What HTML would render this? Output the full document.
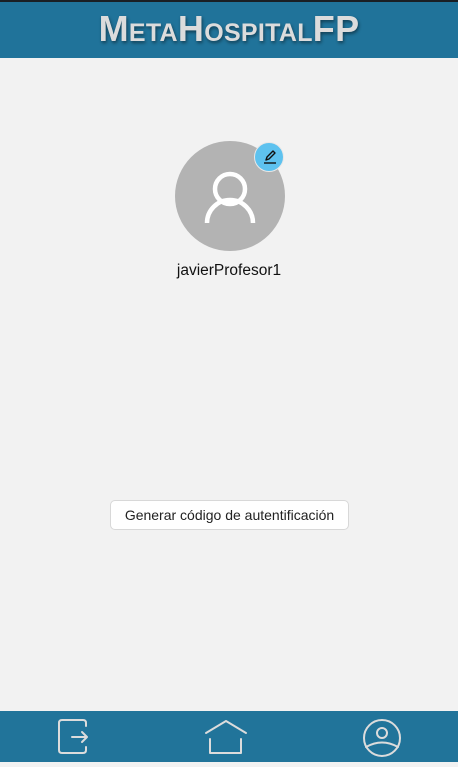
<!DOCTYPE html>
<html><head><meta charset="utf-8"><style>
body{margin:0;width:458px;height:762px;background:#f2f2f2;font-family:"Liberation Sans",sans-serif;position:relative;overflow:hidden}
.hdr{position:absolute;left:0;top:0;width:458px;height:58px;background:#20739a;border-top:2px solid #1a1f24;box-sizing:border-box}
.title{position:absolute;left:0;width:458px;top:6px;text-align:center;color:#dcdcdc;font-weight:bold;font-size:36px;font-variant:small-caps;letter-spacing:0.3px;text-shadow:1px 2px 3px rgba(0,0,0,.45)}
.ftr{position:absolute;left:0;top:711px;width:458px;height:51px;background:#21749a}
.av{position:absolute;left:175px;top:141px;width:110px;height:110px;border-radius:50%;background:#b3b3b3}
.badge{position:absolute;left:254px;top:142px;width:30px;height:30px;border-radius:50%;background:#5ec2ef;border:1px solid #e8e8e8;box-sizing:border-box}
.name{position:absolute;left:0;width:458px;top:262px;text-align:center;font-size:15.5px;color:#111}
.btn{position:absolute;left:110px;top:500px;width:239px;height:30px;background:#fff;border:1px solid #d8d8d8;border-radius:5px;box-sizing:border-box;text-align:center;line-height:28px;font-size:14px;color:#222}
</style></head><body>
<div class="hdr"><div class="title">MetaHospitalFP</div></div>
<div class="av"><svg width="110" height="110" viewBox="0 0 110 110"><circle cx="55" cy="48" r="15" fill="none" stroke="#fff" stroke-width="4.5"/><path d="M32 82 A23 23 0 0 1 78 82" fill="none" stroke="#fff" stroke-width="4.5"/></svg></div>
<div class="badge"><svg width="28" height="28" viewBox="0 0 28 28"><path d="M11 17 L12 14 L18 8 L20 10 L14 16 Z" fill="none" stroke="#111" stroke-width="1.4" stroke-linejoin="round"/><line x1="9" y1="20" x2="21" y2="20" stroke="#111" stroke-width="1.4"/></svg></div>
<div class="name">javierProfesor1</div>
<div class="btn">Generar código de autentificación</div>
<div class="ftr"><svg width="458" height="51" viewBox="0 0 458 51">
<g fill="none" stroke="#dcdcdc" stroke-width="2" stroke-linecap="round" stroke-linejoin="round">
<path d="M86 15 V12 Q86 9 83 9 H62 Q59 9 59 12 V39 Q59 42 62 42 H83 Q86 42 86 39 V36"/>
<path d="M72 26 H87 M82 21 L87 26 L82 31"/>
<path d="M206 22 L226 10 L246 22"/>
<path d="M210 28 V42 H241 V28"/>
<circle cx="382" cy="27" r="18"/>
<circle cx="382" cy="22" r="5"/>
<path d="M366 36 Q382 27 398 36"/>
</g></svg></div>
</body></html>
